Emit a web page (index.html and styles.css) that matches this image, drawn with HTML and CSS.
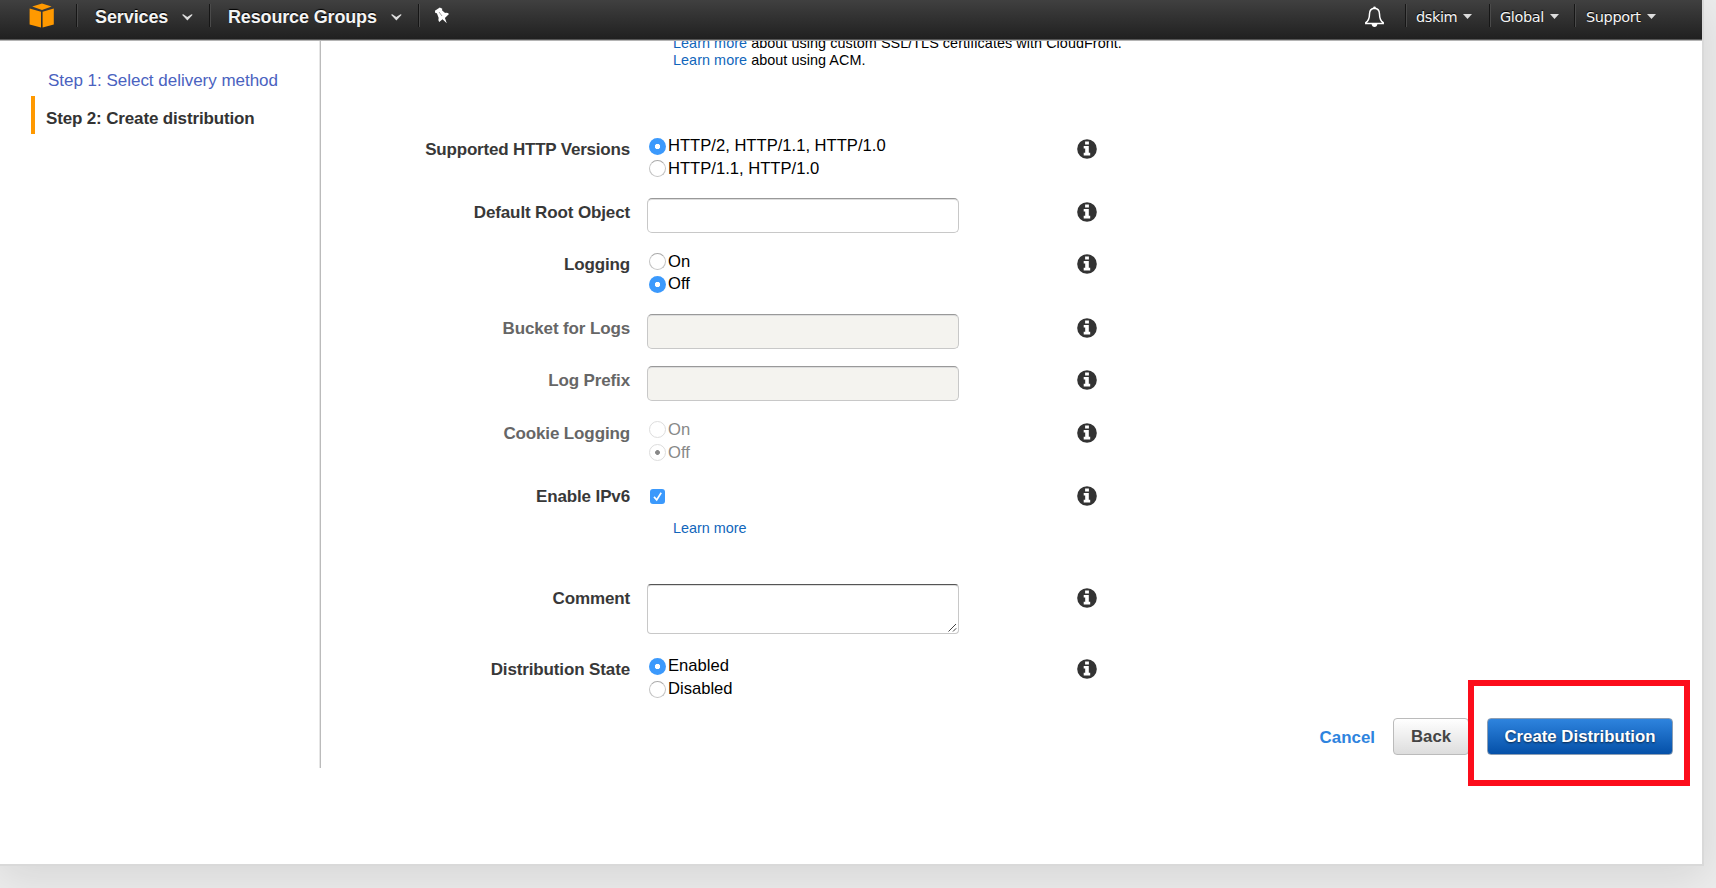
FILE: index.html
```html
<!DOCTYPE html>
<html lang="en">
<head>
<meta charset="utf-8">
<title>Create distribution</title>
<link rel="stylesheet" href="styles.css">
</head>
<body>
<svg width="0" height="0" class="defs">
  <symbol id="info" viewBox="0 0 20 20"><circle cx="10" cy="10" r="9.8" fill="#333"/><path d="M8.1 2.4h3.8v3H8.1zM6.7 7h5.1v6.8h1.4v2.6H6.7v-2.6h1.5V9.6H6.7z" fill="#fff"/></symbol>
  <symbol id="chev" viewBox="0 0 11 7"><path d="M0 .8 1.3.2 5.3 3 9.500.2 10.700.8 5.400 6.600z" fill="#ddd"/></symbol>
  <symbol id="caret" viewBox="0 0 9 5"><path d="M0 0h9L4.500 4.900z" fill="#ddd"/></symbol>
</svg>
<div class="window">
  <header class="nav">
    <div class="logo"><svg width="26" height="26" viewBox="0 0 26 26"><g fill="#ff9900"><path d="M3.200 3.600 13 .4l9.600 3.200L13 6.900z"/><path d="M.6 5.500 12 8.700v15.900L.6 21.500z"/><path d="M24.800 5.500 13.600 8.700v15.900l11.200-3.100z"/></g></svg></div>
    <div class="item services"><span>Services</span><svg width="11" height="7"><use href="#chev"/></svg></div>
    <div class="item groups"><span>Resource Groups</span><svg width="11" height="7"><use href="#chev"/></svg></div>
    <div class="item pin"><svg width="17" height="17" viewBox="0 0 17 17"><path d="M5.800.6 8.300 1.700 8 3.200l3.100 2.800c1.500-.4 2.900-.1 3.900 1.100L10.900 11l1.900 5.200-4.300-3.900-3.200 2.600c-1-1.200-1.100-2.600-.6-4L2.900 6.300 1.300 6 .9 3.800z" fill="#fff"/><path d="m5 5 3 4" stroke="#888" stroke-width=".8"/></svg></div>
    <div class="spacer"></div>
    <div class="bell"><svg width="21" height="22" viewBox="0 0 21 22"><path d="M10.500 2.200c-3.500.2-5 2.700-5 5.800 0 4.200-.9 6.700-3.700 8.700v.7h17.400v-.7c-2.800-2-3.700-4.500-3.700-8.700 0-3.100-1.500-5.600-5-5.800z" fill="none" stroke="#fff" stroke-width="1.500"/><circle cx="10.500" cy="1.700" r="1.300" fill="#fff"/><path d="M7.600 18h5.800c-.2 1.900-1.300 2.900-2.900 2.900S7.800 19.900 7.600 18z" fill="#fff"/></svg></div>
    <div class="item small user"><span>dskim</span><svg width="9" height="5"><use href="#caret"/></svg></div>
    <div class="item small region"><span>Global</span><svg width="9" height="5"><use href="#caret"/></svg></div>
    <div class="item small support"><span>Support</span><svg width="9" height="5"><use href="#caret"/></svg></div>
  </header>
  <div class="body">
    <aside class="steps">
      <a class="step">Step 1: Select delivery method</a>
      <div class="step current">Step 2: Create distribution</div>
    </aside>
    <main class="main">
      <div class="help top"><div><a>Learn more</a> about using custom SSL/TLS certificates with CloudFront.</div><div><a>Learn more</a> about using ACM.</div></div>
      <div class="row tall"><label class="label http">Supported HTTP Versions</label><div><div class="opt"><i class="radio on"></i>HTTP/2, HTTP/1.1, HTTP/1.0</div><div class="opt"><i class="radio"></i>HTTP/1.1, HTTP/1.0</div></div><svg class="info"><use href="#info"/></svg></div>
      <div class="row"><label class="label">Default Root Object</label><div><div class="input"></div></div><svg class="info"><use href="#info"/></svg></div>
      <div class="row tall"><label class="label">Logging</label><div><div class="opt"><i class="radio"></i>On</div><div class="opt"><i class="radio on"></i>Off</div></div><svg class="info"><use href="#info"/></svg></div>
      <div class="row off"><label class="label">Bucket for Logs</label><div><div class="input"></div></div><svg class="info"><use href="#info"/></svg></div>
      <div class="row off"><label class="label">Log Prefix</label><div><div class="input"></div></div><svg class="info"><use href="#info"/></svg></div>
      <div class="row tall off"><label class="label">Cookie Logging</label><div><div class="opt"><i class="radio"></i>On</div><div class="opt"><i class="radio on"></i>Off</div></div><svg class="info"><use href="#info"/></svg></div>
      <div class="row ipv6"><label class="label">Enable IPv6</label><div><svg class="check" viewBox="0 0 15 15"><rect width="15" height="15" rx="3" fill="#3b99fc"/><path d="m4 7.900 2.700 3L11.200 3.800" fill="none" stroke="#fff" stroke-width="1.700"/></svg><div class="help"><a>Learn more</a></div></div><svg class="info"><use href="#info"/></svg></div>
      <div class="row comment"><label class="label">Comment</label><div><div class="input area"><svg width="9" height="9" viewBox="0 0 9 9"><path d="M.5 8.500l7.500-7.500M5 8.500l3.200-3.200" stroke="#444" stroke-width="1"/></svg></div></div><svg class="info"><use href="#info"/></svg></div>
      <div class="row state"><label class="label">Distribution State</label><div><div class="opt"><i class="radio on"></i>Enabled</div><div class="opt"><i class="radio"></i>Disabled</div></div><svg class="info"><use href="#info"/></svg></div>
      <div class="actions"><a class="cancel">Cancel</a><div class="btn">Back</div><div class="btn primary">Create Distribution<div class="highlight"></div></div></div>
    </main>
  </div>
</div>
</body>
</html>
```
FILE: styles.css
```css
* { box-sizing: border-box; }
html, body { margin: 0; height: 888px; overflow: hidden; }
body { background: #ececec; font-family: "Liberation Sans", Arial, sans-serif; color: #000; }
.defs { display: block; }
svg { display: block; }
.window { width: 1704px; height: 866px; background: #fff; border: solid #d9d9d9; border-width: 0 2px 2px 0; box-shadow: 0 10px 40px rgba(0,0,0,.1); display: flex; flex-direction: column; }

.nav { position: relative; z-index: 2; height: 41px; flex: none; display: flex; align-items: flex-start; background: linear-gradient(#404040, #202020 39px); border-bottom: 1px solid #b4b4b4; box-shadow: inset 0 -1px #555; color: #f4f4f4; }
.logo { width: 76px; padding: 3px 0 0 29px; }
.item { display: flex; align-items: center; height: 23px; margin-top: 4px; border-left: 1px solid #161616; box-shadow: inset 1px 0 #4a4a4a; font-weight: bold; font-size: 18px; text-shadow: 0 -1px 1px #000; }
.item span { padding-top: 3px; }
.services { width: 133px; padding-left: 18px; gap: 14px; }
.services span { letter-spacing: -.1px; }
.groups { width: 209px; padding-left: 18px; gap: 14px; }
.groups span { letter-spacing: -.15px; }
.item svg { margin-top: 3px; }
.pin { padding-left: 15px; }
.pin svg { margin: 0; }
.spacer { flex: 1; }
.bell { width: 41px; padding-top: 6px; }
.small { font: 14.5px "DejaVu Sans", sans-serif; gap: 6px; }
.small span { letter-spacing: -.4px; padding-top: 2px; }
.small svg { margin-top: 2px; }
.user { width: 84px; padding-left: 10px; }
.region { width: 85px; padding-left: 10px; }
.support { width: 128px; padding-left: 11px; }

.body { display: flex; height: 727px; }
.steps { width: 321px; flex: none; padding-top: 16px; border-right: 1px solid #bbb; box-shadow: inset -1px 0 #e6e6e6; }
.step { display: block; height: 39px; line-height: 47px; padding-left: 48px; font-size: 17px; letter-spacing: -.02px; color: #4a62c0; }
.current { height: 38px; margin-left: 31px; padding-left: 11px; border-left: 4px solid #f90; line-height: 46px; font-weight: bold; color: #333; letter-spacing: -.15px; }

.main { flex: none; width: 1381px; }
.help { font-size: 14.400px; line-height: 16.700px; padding-left: 26px; }
.help a { color: #1166bb; }
.top { padding-left: 352px; margin-top: -5.800px; height: 99.500px; letter-spacing: .05px; }
.row { display: grid; grid-template-columns: 309px 447px 20px; column-gap: 0; height: 52.500px; }
.row > div { padding-left: 17px; }
.tall { height: 63.200px; }
.ipv6 { height: 102.200px; }
.comment { height: 71.200px; }
.state { height: 63px; }
.label { font-size: 17px; font-weight: bold; line-height: 30.500px; text-align: right; color: #383838; letter-spacing: -.13px; }
.http { letter-spacing: -.2px; }
.off .label { color: #666; }
.info { width: 20px; height: 20px; margin-top: 4px; }
.opt { display: flex; align-items: center; height: 22.700px; font-size: 16.600px; line-height: 24px; }
.off .opt { color: #888; }
.radio { width: 17px; height: 17px; margin: 0 2px 0 2px; border-radius: 50%; border: 1px solid #c4c4c4; border-top-color: #aaa; background: #fff; }
.radio.on { border: 0; background: radial-gradient(circle, #fff 2.300px, #3b99fc 3px); }
.off .radio { border: 1px solid #ddd; }
.off .radio.on { background: radial-gradient(circle, #888 2px, #fff 2.800px); }
.input { width: 312px; height: 35px; border: 1px solid #c8c8c8; border-top-color: #999; border-radius: 5px; background: #fff; box-shadow: inset 0 1px #ddd; }
.off .input { background: #f4f3ef; }
.area { height: 50px; display: flex; align-items: flex-end; justify-content: flex-end; padding: 0 1px 1px 0; border-top-color: #555; border-radius: 4px; }
.check { width: 15px; height: 15px; margin: 7px 0 16px 3px; }

.actions { display: flex; justify-content: flex-end; align-items: flex-start; padding-right: 29px; }
.cancel { font-size: 16.900px; font-weight: bold; line-height: 40px; color: #2e84de; margin-right: 18px; }
.btn { height: 37px; line-height: 36px; width: 76px; margin-right: 18px; border: 1px solid #bbb; border-radius: 4px; background: linear-gradient(#fff, #ddd); color: #444; font-size: 16.800px; font-weight: bold; text-align: center; }
.primary { position: relative; width: 186px; margin: 0; border-color: #8c9eb4; background: linear-gradient(#2e84de, #0550a8); color: #fff; text-shadow: 0 1px 2px rgba(0,0,0,.6); }
.highlight { position: absolute; left: -20px; top: -39px; width: 222px; height: 106px; border: 6px solid #fc0d1b; }
```
